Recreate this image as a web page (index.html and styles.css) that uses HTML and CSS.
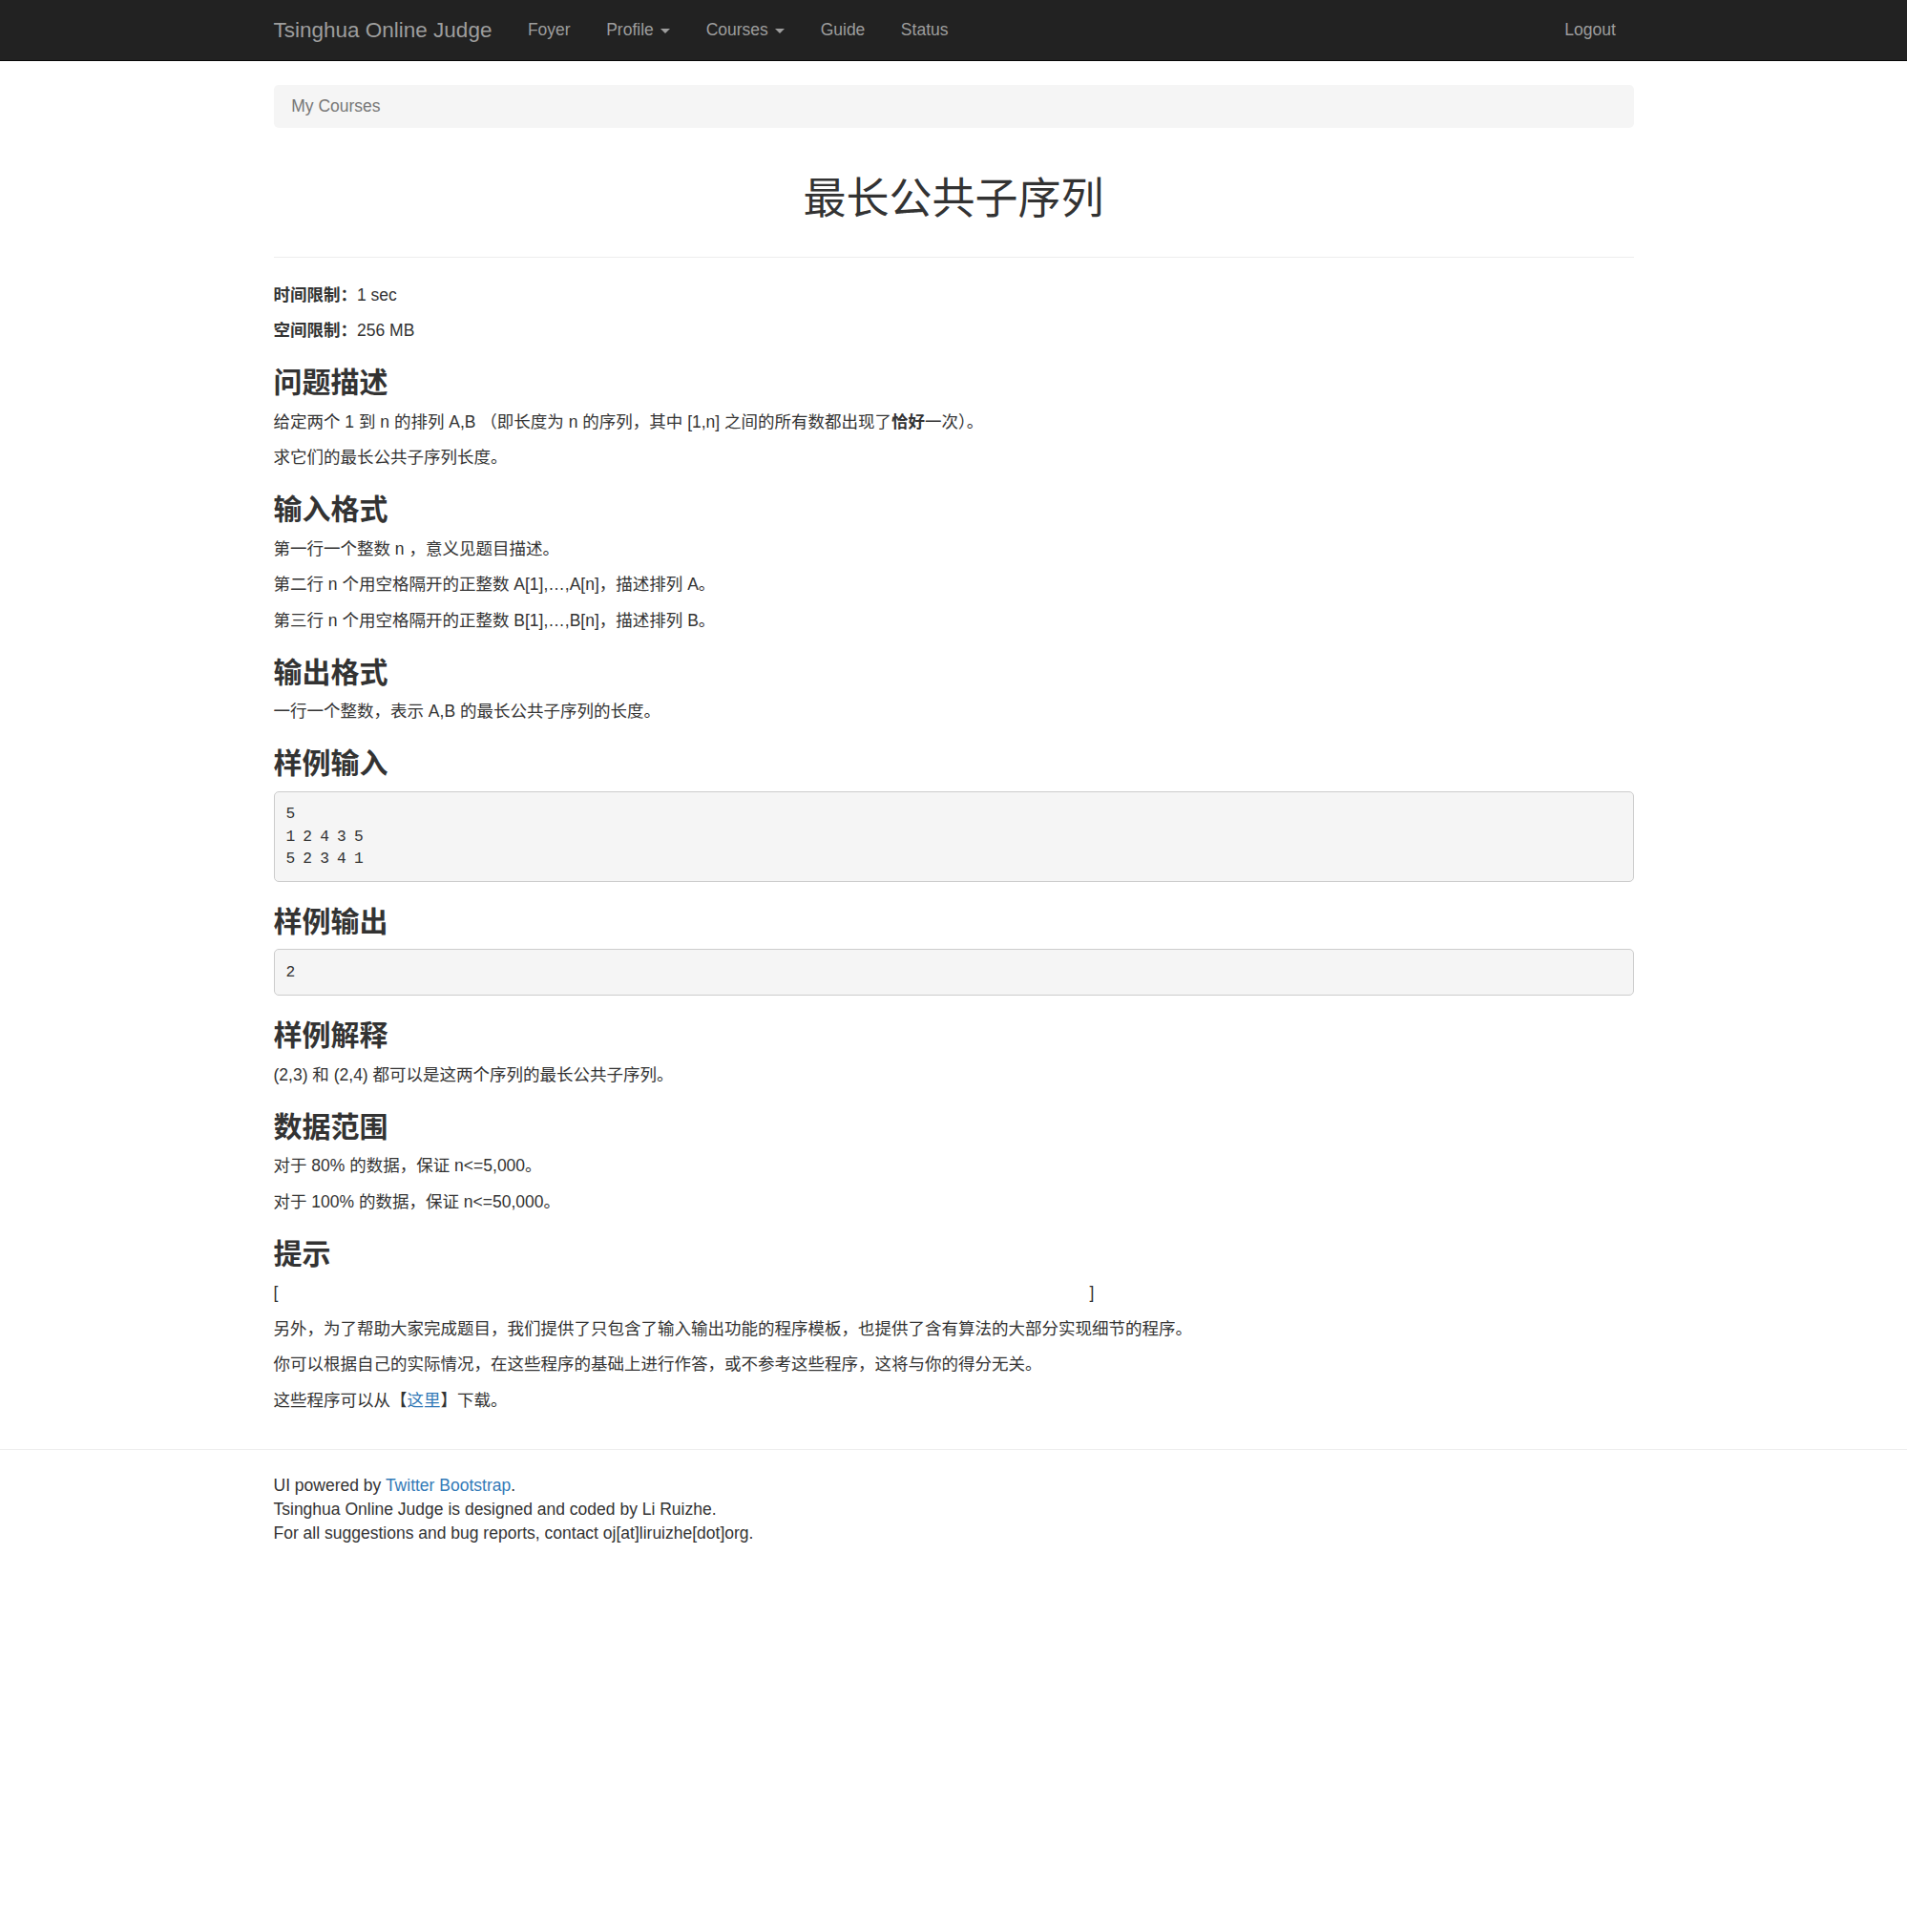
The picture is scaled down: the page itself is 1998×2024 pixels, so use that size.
FILE: index.html
```html
<!DOCTYPE html>
<html lang="zh-CN">
<head>
<meta charset="utf-8">
<title>最长公共子序列 - Tsinghua Online Judge</title>
<link rel="stylesheet" href="styles.css">
</head>
<body>
<nav class="navbar">
  <div class="container nav-inner">
    <a class="brand" href="#">Tsinghua Online Judge</a>
    <ul class="nav">
      <li><a href="#">Foyer</a></li>
      <li><a href="#">Profile <span class="caret"></span></a></li>
      <li><a href="#">Courses <span class="caret"></span></a></li>
      <li><a href="#">Guide</a></li>
      <li><a href="#">Status</a></li>
    </ul>
    <ul class="nav nav-right">
      <li><a href="#">Logout</a></li>
    </ul>
  </div>
</nav>

<div class="container main">
  <ol class="breadcrumb">
    <li class="active">My Courses</li>
  </ol>

  <div class="page-header">
    <h1>最长公共子序列</h1>
  </div>

  <p><strong>时间限制：</strong>1 sec</p>
  <p><strong>空间限制：</strong>256 MB</p>

  <h3>问题描述</h3>
  <p>给定两个 1 到 n 的排列 A,B （即长度为 n 的序列，其中 [1,n] 之间的所有数都出现了<strong>恰好</strong>一次）。</p>
  <p>求它们的最长公共子序列长度。</p>

  <h3>输入格式</h3>
  <p>第一行一个整数 n ，意义见题目描述。</p>
  <p>第二行 n 个用空格隔开的正整数 A[1],…,A[n]，描述排列 A。</p>
  <p>第三行 n 个用空格隔开的正整数 B[1],…,B[n]，描述排列 B。</p>

  <h3>输出格式</h3>
  <p>一行一个整数，表示 A,B 的最长公共子序列的长度。</p>

  <h3>样例输入</h3>
  <pre>5
1 2 4 3 5
5 2 3 4 1</pre>

  <h3>样例输出</h3>
  <pre>2</pre>

  <h3>样例解释</h3>
  <p>(2,3) 和 (2,4) 都可以是这两个序列的最长公共子序列。</p>

  <h3>数据范围</h3>
  <p>对于 80% 的数据，保证 n&lt;=5,000。</p>
  <p>对于 100% 的数据，保证 n&lt;=50,000。</p>

  <h3>提示</h3>
  <p>[<span class="blank"></span>]</p>
  <p>另外，为了帮助大家完成题目，我们提供了只包含了输入输出功能的程序模板，也提供了含有算法的大部分实现细节的程序。</p>
  <p>你可以根据自己的实际情况，在这些程序的基础上进行作答，或不参考这些程序，这将与你的得分无关。</p>
  <p>这些程序可以从【<a href="#">这里</a>】下载。</p>
</div>

<footer class="footer">
  <div class="container">
    <div>UI powered by <a href="#">Twitter Bootstrap</a>.</div>
    <div>Tsinghua Online Judge is designed and coded by Li Ruizhe.</div>
    <div>For all suggestions and bug reports, contact oj[at]liruizhe[dot]org.</div>
  </div>
</footer>
</body>
</html>
```

FILE: styles.css
```css
* { box-sizing: border-box; }

html, body {
  margin: 0;
  padding: 0;
  background: #fff;
}

body {
  font-family: "Liberation Sans", Arial, "Noto Sans CJK SC", sans-serif;
  font-size: 17.5px;
  line-height: 25px;
  color: #333;
}

a {
  color: #337ab7;
  text-decoration: none;
}

.container {
  width: 1462.5px;
  margin: 0 auto;
  padding: 0 18.75px;
}

/* navbar */
.navbar {
  background: #222;
  border-bottom: 1px solid #080808;
  min-height: 63.5px;
  margin-bottom: 25px;
}

.nav-inner {
  display: flex;
  align-items: flex-start;
}

.brand {
  display: block;
  margin-left: -18.75px;
  padding: 18.75px;
  font-size: 22.5px;
  line-height: 25px;
  height: 62.5px;
  color: #9d9d9d;
}

.nav {
  display: flex;
  list-style: none;
  margin: 0;
  padding: 0;
}

.nav a {
  display: block;
  padding: 18.75px;
  line-height: 25px;
  color: #9d9d9d;
}

.nav-right {
  margin-left: auto;
}

.caret {
  display: inline-block;
  width: 0;
  height: 0;
  margin-left: 2.5px;
  vertical-align: middle;
  border-top: 5px solid #9d9d9d;
  border-left: 5px solid transparent;
  border-right: 5px solid transparent;
}

/* breadcrumb */
.breadcrumb {
  list-style: none;
  margin: 0 0 25px;
  padding: 10px 18.75px;
  background: #f5f5f5;
  border-radius: 5px;
}

.breadcrumb .active {
  color: #777;
}

/* page header */
.page-header {
  margin: 50px 0 26.5px;
  padding-bottom: 23.5px;
  border-bottom: 1px solid #eee;
}

.page-header h1 {
  margin: 0 0 12.5px;
  font-size: 45px;
  line-height: 49.5px;
  font-weight: 400;
  text-align: center;
  color: #333;
}

p {
  margin: 0 0 12.5px;
}

strong {
  font-weight: 700;
}

h3 {
  font-size: 30px;
  line-height: 33px;
  font-weight: 700;
  margin: 25px 0 12.5px;
  color: #333;
}

pre {
  margin: 0 0 12.5px;
  padding: 11.875px;
  font-family: "Liberation Mono", "DejaVu Sans Mono", monospace;
  font-size: 16.25px;
  line-height: 23.2px;
  letter-spacing: -0.8px;
  color: #333;
  background: #f5f5f5;
  border: 1px solid #ccc;
  border-radius: 5px;
  white-space: pre;
}

.blank {
  display: inline-block;
  width: 850px;
}

/* footer */
.footer {
  margin-top: 38.5px;
  border-top: 1px solid #eee;
  padding-top: 24.5px;
  padding-bottom: 40px;
}
```
